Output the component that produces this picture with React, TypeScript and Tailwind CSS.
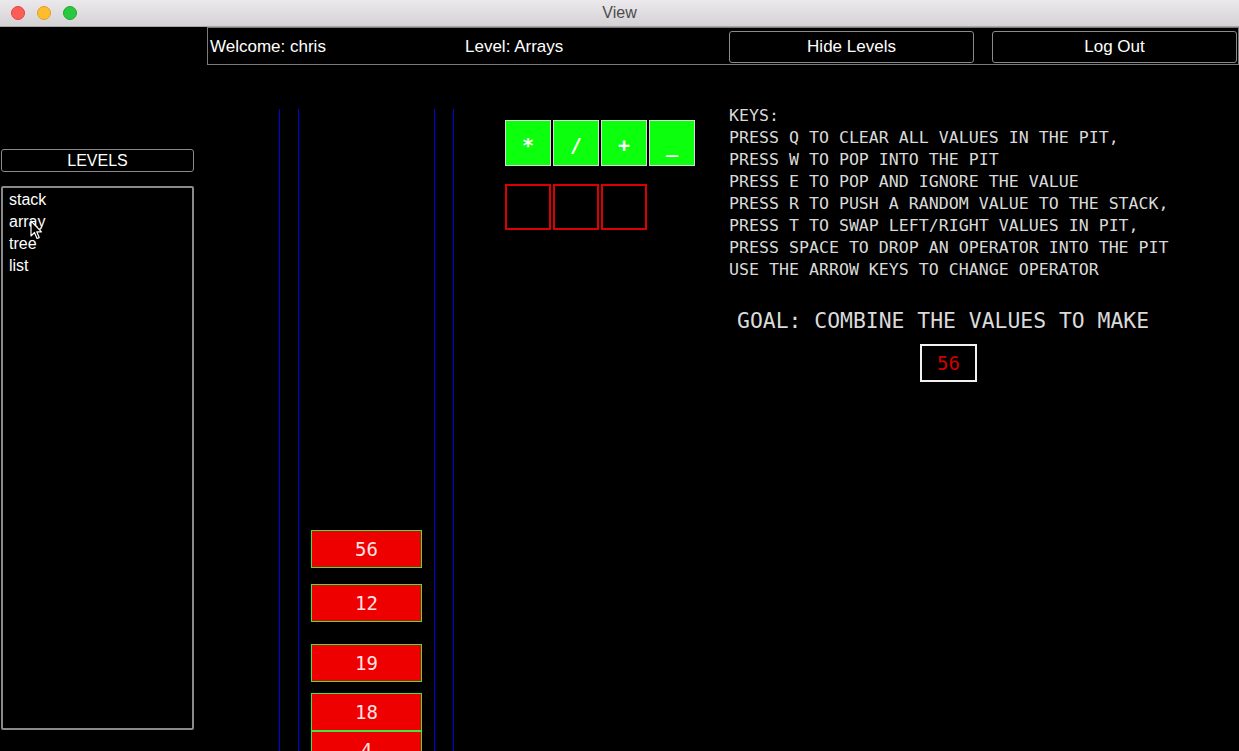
import React from "react";

const keys = [
  "KEYS:",
  "PRESS Q TO CLEAR ALL VALUES IN THE PIT,",
  "PRESS W TO POP INTO THE PIT",
  "PRESS E TO POP AND IGNORE THE VALUE",
  "PRESS R TO PUSH A RANDOM VALUE TO THE STACK,",
  "PRESS T TO SWAP LEFT/RIGHT VALUES IN PIT,",
  "PRESS SPACE TO DROP AN OPERATOR INTO THE PIT",
  "USE THE ARROW KEYS TO CHANGE OPERATOR",
];

const blocks = [
  { v: "56", mt: "mt-0" },
  { v: "12", mt: "mt-[16px]" },
  { v: "19", mt: "mt-[22px]" },
  { v: "18", mt: "mt-[11px]" },
  { v: "4", mt: "mt-0" },
];

const mono = { fontFamily: '"DejaVu Sans Mono", "Liberation Mono", monospace' };
const sans = { fontFamily: '"Liberation Sans", Arial, sans-serif' };

function BlueLine() {
  return <div className="w-[1px] self-stretch shrink-0 bg-[#0000e0]" />;
}

export default function App() {
  return (
    <div className="w-[1239px] h-[751px] bg-black overflow-hidden flex flex-col relative" style={sans}>
      {/* title bar */}
      <div className="h-[27px] shrink-0 bg-gradient-to-b from-[#ebe9eb] to-[#d4d2d4] border-b border-[#a9a7a9] flex items-center relative">
        <div className="flex gap-[12px] pl-[11px]">
          <div className="w-[14px] h-[14px] rounded-full bg-[#fd5c57] border border-[#e2443e]" />
          <div className="w-[14px] h-[14px] rounded-full bg-[#febc2f] border border-[#e1a023]" />
          <div className="w-[14px] h-[14px] rounded-full bg-[#2ac841] border border-[#1eab2d]" />
        </div>
        <div className="absolute inset-0 flex items-center justify-center text-[16px] text-[#4c4c4c]">View</div>
      </div>

      {/* body */}
      <div className="flex flex-1 min-h-0">
        {/* sidebar */}
        <aside className="w-[207px] shrink-0 pt-[122px] pl-[1px]">
          <div className="w-[193px] h-[23px] border border-[#8a8a8a] rounded-[3px] flex items-center justify-center text-white text-[16px]">
            LEVELS
          </div>
          <div className="w-[193px] h-[544px] mt-[14px] border-2 border-[#8a8a8a] rounded-[2px] pl-[6px] pt-[1px] text-white text-[16px] leading-[22px]">
            <div>stack</div>
            <div>array</div>
            <div>tree</div>
            <div>list</div>
          </div>
        </aside>

        {/* main */}
        <main className="flex-1 flex flex-col min-w-0">
          <div className="h-[38px] shrink-0 border border-[#7a7a7a] flex items-center text-white text-[17px] pt-[1px]">
            <span className="w-[257px] pl-[2px]">Welcome: chris</span>
            <span className="w-[264px]">Level: Arrays</span>
            <div className="w-[245px] h-[32px] border border-[#8a8a8a] rounded-[3px] flex items-center justify-center">Hide Levels</div>
            <div className="w-[245px] h-[32px] ml-[18px] border border-[#8a8a8a] rounded-[3px] flex items-center justify-center">Log Out</div>
          </div>

          <div className="flex flex-1 min-h-0">
            {/* stack well */}
            <div className="ml-[72px] mt-[44px] flex">
              <BlueLine />
              <div className="w-[18px]" />
              <BlueLine />
              <div className="w-[135px] pt-[421px] pl-[12px]">
                {blocks.map((b, i) => (
                  <div
                    key={i}
                    className={`${b.mt} w-[111px] h-[38px] shrink-0 bg-[#ee0000] border border-[#3ce83c] flex items-center justify-center text-[#ffe2e2] text-[19px]`}
                    style={mono}
                  >
                    {b.v}
                  </div>
                ))}
              </div>
              <BlueLine />
              <div className="w-[18px]" />
              <BlueLine />
            </div>

            {/* operators */}
            <div className="ml-[51px] mt-[55px] flex flex-col gap-[18px]">
              <div className="flex gap-[2px]">
                {["*", "/", "+", "_"].map((o) => (
                  <div
                    key={o}
                    className="w-[46px] h-[46px] bg-[#0cff0c] border border-[#d9d9d9] flex items-center justify-center text-white text-[20px] font-bold pt-[4px]"
                    style={mono}
                  >
                    {o}
                  </div>
                ))}
              </div>
              <div className="flex gap-[2px]">
                {[0, 1, 2].map((i) => (
                  <div key={i} className="w-[46px] h-[46px] border-2 border-[#dd0000]" />
                ))}
              </div>
            </div>

            {/* keys */}
            <div className="ml-[34px] mt-[40px] flex flex-col">
              <div className="text-[#dadada] text-[16.6px] leading-[22px]" style={mono}>
                {keys.map((k) => (
                  <div key={k} className="whitespace-pre">{k}</div>
                ))}
              </div>
              <div className="mt-[25px] ml-[8px] text-[#dadada] text-[21.4px] leading-[30px] whitespace-pre" style={mono}>
                GOAL: COMBINE THE VALUES TO MAKE
              </div>
              <div className="mt-[8px] ml-[191px] w-[57px] h-[38px] border-2 border-[#f2f2f2] flex items-center justify-center text-[#d00000] text-[19px]" style={mono}>
                56
              </div>
            </div>
          </div>
        </main>
      </div>

      {/* mouse cursor */}
      <svg className="absolute left-[30px] top-[220px]" width="13" height="20" viewBox="0 0 13 20">
        <path d="M1 1 L1 16 L4.5 12.5 L7 18.5 L9.2 17.6 L6.8 11.8 L11.5 11.8 Z" fill="#000" stroke="#fff" strokeWidth="1.2" strokeLinejoin="round" />
      </svg>
    </div>
  );
}
